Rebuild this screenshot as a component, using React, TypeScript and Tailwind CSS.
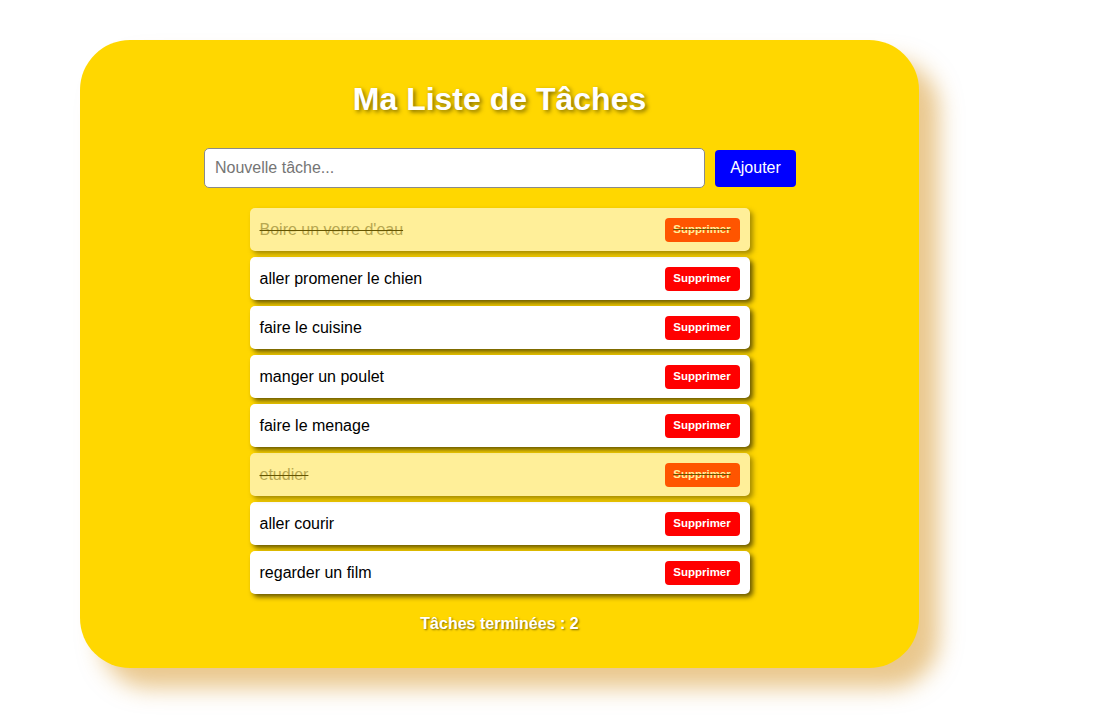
import { useState } from "react";

interface Task {
  id: number;
  text: string;
  done: boolean;
}

const initialTasks: Task[] = [
  { id: 1, text: "Boire un verre d'eau", done: true },
  { id: 2, text: "aller promener le chien", done: false },
  { id: 3, text: "faire le cuisine", done: false },
  { id: 4, text: "manger un poulet", done: false },
  { id: 5, text: "faire le menage", done: false },
  { id: 6, text: "etudier", done: true },
  { id: 7, text: "aller courir", done: false },
  { id: 8, text: "regarder un film", done: false },
];

export default function App() {
  const [tasks, setTasks] = useState<Task[]>(initialTasks);
  const [value, setValue] = useState("");

  const addTask = () => {
    if (!value.trim()) return;
    setTasks([...tasks, { id: Date.now(), text: value.trim(), done: false }]);
    setValue("");
  };

  const toggle = (id: number) =>
    setTasks(tasks.map((t) => (t.id === id ? { ...t, done: !t.done } : t)));

  const remove = (id: number) => setTasks(tasks.filter((t) => t.id !== id));

  const doneCount = tasks.filter((t) => t.done).length;

  return (
    <div className="min-h-[720px] bg-white pt-[40px] pl-[80px] font-['Liberation_Sans',Arial,sans-serif]">
      <div className="w-[839px] h-[628px] rounded-[50px] bg-[#ffd700] pt-[41px] flex flex-col items-center shadow-[20px_20px_22px_rgba(214,145,30,0.5)]">
        <h1 className="text-[32px] leading-[37px] font-bold text-white [text-shadow:2px_2px_4px_rgba(0,0,0,0.5)]">
          Ma Liste de Tâches
        </h1>

        <div className="mt-[30px] flex items-center gap-[10px] pl-[1px]">
          <input
            value={value}
            onChange={(e) => setValue(e.target.value)}
            placeholder="Nouvelle tâche..."
            className="w-[501px] h-[40px] rounded-[5px] border border-[#8a8a8a] bg-white px-[10px] text-[16px] text-black placeholder:text-[#757575] outline-none"
          />
          <button
            onClick={addTask}
            className="w-[81px] h-[37px] rounded-[4px] bg-[#0000ff] text-white text-[16px]"
          >
            Ajouter
          </button>
        </div>

        <ul className="mt-[20px] flex flex-col gap-[6px] w-[500px]">
          {tasks.map((task) => (
            <li
              key={task.id}
              onClick={() => toggle(task.id)}
              className={`h-[43px] flex items-center justify-between rounded-[5px] bg-white pl-[10px] pr-[10px] shadow-[3px_3px_5px_rgba(0,0,0,0.6)] cursor-pointer ${
                task.done ? "opacity-60 line-through" : ""
              }`}
            >
              <span className={`text-[16px] ${task.done ? "text-[#888888]" : "text-black"}`}>
                {task.text}
              </span>
              <button
                onClick={(e) => {
                  e.stopPropagation();
                  remove(task.id);
                }}
                className="w-[75px] h-[24px] rounded-[4px] bg-[#ff0000] text-white text-[11.5px] font-bold"
              >
                Supprimer
              </button>
            </li>
          ))}
        </ul>

        <p className="mt-[20px] text-[16px] leading-[19px] font-bold text-white [text-shadow:1px_1px_2px_rgba(0,0,0,0.5)]">
          Tâches terminées : {doneCount}
        </p>
      </div>
    </div>
  );
}
